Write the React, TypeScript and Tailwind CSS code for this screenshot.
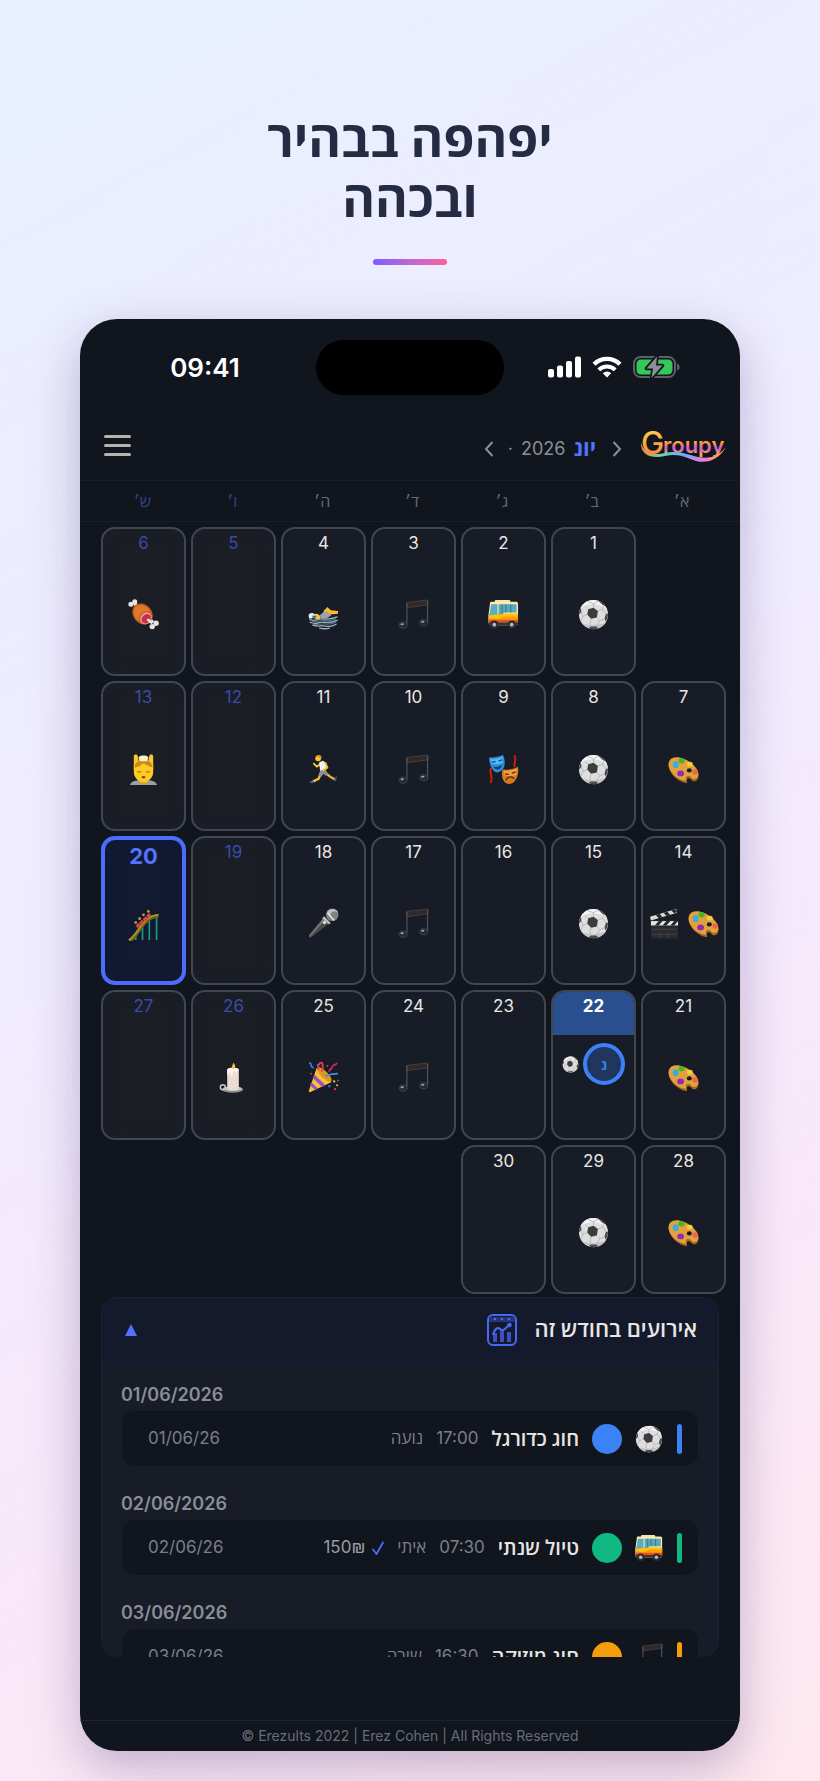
import React from "react";

type EmojiName =
  | "meat" | "swim" | "music" | "bus" | "ball" | "massage" | "run" | "masks"
  | "palette" | "coaster" | "mic" | "clapper" | "candle" | "party";

const drawings: Record<EmojiName, React.ReactNode> = {
  meat: (
    <>
      <g fill="#e9e4df">
        <circle cx="3" cy="5.5" r="2.6" /><circle cx="7" cy="2.8" r="2.6" />
        <path d="M5 5l3-2.500 4 6-3 2z" />
        <path d="M19 20l3-2 5 5-2.500 3z" />
        <circle cx="29" cy="25" r="2.800" /><circle cx="25" cy="28.500" r="2.800" />
      </g>
      <path d="M4.500 12C5 6 11 3.500 16 5c5 1.500 10 7 9.500 13-.5 6-6 9.500-11 8C8 24 4 18 4.500 12z" fill="#c2571a" />
      <path d="M6 11c1.500-5 7-5.500 10-4.500 3 1 6 4 7 7-4-2-9 0-11 4-1 2-1 4-.5 5.500C7 20 5 15 6 11z" fill="#e0782a" />
      <ellipse cx="18.500" cy="20" rx="6.500" ry="5.500" transform="rotate(-45 18.500 20)" fill="#f4a49a" />
      <ellipse cx="18.800" cy="20.300" rx="5.400" ry="4.400" transform="rotate(-45 18.800 20.300)" fill="#c5314b" />
      <path d="M19 21.500l2-1.500 4 3-2 2.500z" fill="#e9e4df" />
    </>
  ),
  swim: (
    <>
      <path d="M12 17l7-6.500 5 6.500-5 3-5 .5z" fill="#9fa0a8" />
      <path d="M16 12.500l4-4.300 3.500 3.300 7.500 1v2.600l-8 .9-4-3.500-2 1.500z" fill="#fbb92d" />
      <path d="M5 16.500c3-2.500 7-1 8 2.500l-1 2-5-.5z" fill="#fcc23a" />
      <path d="M.5 17.500c0-3.500 5-3.800 6-1.500l-1 3.500-4 1z" fill="#e7eef2" />
      <path d="M4.500 17l4 .5-.5 2.200-3.500-.7z" fill="#2e6f9b" />
      <path d="M2 21c5 3 8-1 13-.5 5 .5 9 .5 15-2M2 24c6 3 9-.5 14 0 5 .5 9 .5 14-2M5 27c5 2 9 0 13 1 4 .5 8 0 11-2M12 30c4 1 7 1 10 0" fill="none" stroke="#9bb2be" strokeWidth="1.300" strokeLinecap="round" />
      <path d="M3 22.500c5 2.500 8-.5 13-.3 5 .5 8 .5 13-1.700M4 25.500c5 2.500 9-.2 13 .2 4 .5 7 .3 12-1.700" fill="none" stroke="#4f6b7c" strokeWidth="1.200" />
    </>
  ),
  music: (
    <>
      <path d="M9 3.500l22-2.500v5L9 9z" fill="#332828" stroke="#4b4447" strokeWidth=".8" />
      <path d="M9.200 4v22M30.500 2v22" stroke="#4c525d" strokeWidth="1.300" />
      <ellipse cx="5.300" cy="27" rx="4.200" ry="3.200" fill="#252a31" stroke="#444b55" strokeWidth=".8" />
      <ellipse cx="26.500" cy="24.500" rx="4.200" ry="3.200" fill="#252a31" stroke="#444b55" strokeWidth=".8" />
      <ellipse cx="4.300" cy="26" rx="1.800" ry="1" fill="#98a1a5" />
      <ellipse cx="25.500" cy="23.500" rx="1.800" ry="1" fill="#98a1a5" />
    </>
  ),
  bus: (
    <>
      <rect x="7" y="1" width="16" height="3" rx="1" fill="#f3e3b2" />
      <path d="M3 2.800h26c1.300 0 2 1 2 2V25c0 1-.8 2-2 2H3c-1.300 0-2.500-1-2.500-2.500v-8L2 5c0-1.200.3-2.200 1-2.200z" fill="#fbe9b4" />
      <path d="M.8 15h30.200v6H.8z" fill="#ffc20e" />
      <path d="M.5 19.500l10 .8L16 18h15v5H.5z" fill="#ff9d0a" />
      <path d="M.5 21.500H31v2.500H.5z" fill="#e8501d" />
      <path d="M.5 24H31v1.500c0 1-1 1.500-2 1.500H3C1.500 27 .5 26 .5 25z" fill="#3a3535" />
      <path d="M3.300 5.500h6.500v10.200L1.500 17z" fill="#5badc0" />
      <path d="M11 5.500h18.500V14H17l-2.500 2H11z" fill="#57a9bd" />
      <path d="M14.500 5.500v9M18.500 5.500V14M23.500 5.500V14" stroke="#356d7c" strokeWidth=".9" />
      <circle cx="6.500" cy="26.500" r="4.200" fill="#2d2d30" /><circle cx="6.500" cy="26.500" r="2" fill="#b7b7ba" />
      <circle cx="24.500" cy="26.500" r="4.200" fill="#2d2d30" /><circle cx="24.500" cy="26.500" r="2" fill="#b7b7ba" />
    </>
  ),
  ball: (
    <>
      <circle cx="16" cy="16" r="15" fill="#dedede" />
      <path d="M16 1a15 15 0 0 1 14 9.500c-7-6-21-7-27.500-1A15 15 0 0 1 16 1z" fill="#f4f4f4" />
      <path d="M4 25a15 15 0 0 0 25-1c-6 3-18 4-25 1z" fill="#c4c4c4" />
      <path d="M10.500 10.500L16 9l4.500 3.500-1 6.500-6 1.500-4-4.500z" fill="#3c3c3e" />
      <path d="M20.500 1.800c3.500.9 6.500 3 8.300 6l-3.300-1.500zM31 15c0 3-1 6-2.500 8.300L27.300 20l1.500-4.500zM11 30.200l2-1.700h6l2 1.700a15 15 0 0 1-10 0zM1 16c0-3 .8-5 2-7l.6 4.500z" fill="#4a4a4c" />
      <path d="M16 9V5l5-3M16 5l-6-2.500M20.500 12.500l5-2 1-4M25.500 10.500l3.300 5M19.500 19l3 3.500 5-2M13.500 20.500l-1 4 .5 4M22.500 22.500L19 28M9.500 16L5 18l-2 5M3.600 13.500L5 18M10.500 10.500L7.500 8" fill="none" stroke="#b0b0b2" strokeWidth=".8" />
    </>
  ),
  massage: (
    <>
      <path d="M2 32c1-4 6-5 10-5h8c4 0 9 1 10 5z" fill="#9d9fa6" />
      <path d="M11 24h10v5c-3 2.500-7 2.500-10 0z" fill="#e5a81d" />
      <path d="M6 16V2.500C6 0 9.500 0 10 2l1 5h10l1-5c.5-2 4-2 4 .5V16z" fill="#fdc72c" />
      <path d="M6 11h20v7c0 7-5 11-10 11S6 25 6 18z" fill="#fecb22" />
      <path d="M6.500 14c1-6 5-8 9.500-8s8.500 2 9.500 8c-4-1-8-4-10-4.500C13 12 10 13.500 6.500 14z" fill="#c98a1c" />
      <path d="M11 3.500c1-2.500 9-2.500 10 0l-1 4h-8z" fill="#fff0c0" />
      <path d="M9.500 18c1 1 3 1 4 0M18.500 18c1 1 3 1 4 0" fill="none" stroke="#7c4c11" strokeWidth="1" />
      <ellipse cx="16" cy="24" rx="2" ry="1.200" fill="#8b3b1d" />
    </>
  ),
  run: (
    <>
      <path d="M12.500 10.500l-3.500 2.500-3-3" fill="none" stroke="#fbc02a" strokeWidth="2" strokeLinecap="round" strokeLinejoin="round" />
      <path d="M18.500 20l4.500 3.500 4.500 2.500" fill="none" stroke="#f3b023" strokeWidth="2.400" strokeLinecap="round" />
      <path d="M13 20.500l-2 5-6 3" fill="none" stroke="#fbc02a" strokeWidth="2.400" strokeLinecap="round" strokeLinejoin="round" />
      <path d="M11.500 8.500l4-1.500 3.500 2.500-.8 7.500-5.700.5z" fill="#eef0f4" />
      <path d="M12.500 17l5.700-.6 2.800 4.600-2.800 1.500-2-2-2.500 3-3-1z" fill="#8c9098" />
      <path d="M18 9.500l2 4.500-4 2.500" fill="none" stroke="#fbc02a" strokeWidth="2" strokeLinecap="round" strokeLinejoin="round" />
      <circle cx="10.500" cy="4.500" r="3" fill="#fcc62f" />
      <path d="M8 3c1-2.500 5-2.800 6 0l-.5 2.500-2-2z" fill="#e0981c" />
      <path d="M2 27.500l3.500 0 1 1.800-4.500 1zM27 26l2.300-3 .7.800-1.500 4.700z" fill="#454fa3" />
    </>
  ),
  masks: (
    <>
      <path d="M27.500 2c2 4-1 7 0 11M3 15c-1.500 5 2 8 0 14" fill="none" stroke="#c0200c" strokeWidth="2.200" strokeLinecap="round" />
      <path d="M1 3.500C6 4 11 3 15.500.800c2 5 2.500 10 .5 14C14 18 10 20 7.500 18.500 3.500 16 1 9 1 3.500z" fill="#2b8fe0" />
      <path d="M2.500 5c4 .5 8-.5 12-2 .5 2 .8 4 .7 6-4 2-8 2-11.500 1z" fill="#5cb8f5" />
      <path d="M4 8.500l4-.5M11 7l3.500-1" fill="none" stroke="#0e3f66" strokeWidth="1.300" />
      <path d="M5.500 13c3 1 7 0 9-2.500-.5 3-2 5-4 5.500s-4-1-5-3z" fill="#0e3f66" />
      <path d="M15 16c5 .5 11 0 16-2.800 1 6-.5 12-4 15.500-3 3-8 3-10.500-.7C14 24.500 14 20 15 16z" fill="#d87921" />
      <path d="M16.500 17.500c5 0 9-.8 13-2.500.2 3 0 5-.7 7-5 1-9 1-12.500 0z" fill="#f0a03e" />
      <path d="M17.500 20.500l4 .5M24.500 20l4-1.500M18.500 27c1.500-4 6-4.500 8.500-1.500" fill="none" stroke="#5e290b" strokeWidth="1.400" />
    </>
  ),
  palette: (
    <>
      <path d="M4 5.500c5-3 14 0 20 5 6 4.500 8.500 10 7 14.500-1.500 4-5 4-7 1.500-1.500-1.800-4-2-4.500 0-.4 1.500 1 3.500-.5 3.500C11 29 3.500 22 1.300 15.500-.2 11 .8 7.500 4 5.500z" fill="#a8691f" />
      <path d="M4 4.500c5-3 14 0 20 5 6 4.500 8.500 10 7 13.500-1.500 3.500-5 3.500-7 1.200-1.500-1.800-4.500-2.200-5.500 0-.4 1.500 1 3.700-.5 3.500C11 27 3.500 21 1.300 14.500-.2 10 .8 6.500 4 4.500z" fill="#e2a13c" />
      <ellipse cx="22" cy="17" rx="2.600" ry="2.200" fill="#171c26" />
      <ellipse cx="8" cy="11" rx="3" ry="3.500" fill="#37aedc" />
      <ellipse cx="14" cy="7" rx="3.200" ry="2.800" fill="#48b426" />
      <ellipse cx="22.500" cy="10.500" rx="3" ry="2.500" fill="#f5cf3a" />
      <ellipse cx="28" cy="18.500" rx="2.800" ry="2.800" fill="#ee6353" />
      <ellipse cx="13" cy="20" rx="3.500" ry="3" fill="#8e2bb5" />
    </>
  ),
  coaster: (
    <>
      <path d="M8 24v7M15 18v13M22 10v21M29.500 7v24" stroke="#1d9a80" strokeWidth="1.700" />
      <path d="M1 32C11 27 14 7 31.500 6" fill="none" stroke="#736319" strokeWidth="4" />
      <path d="M1 31C11 26 14 6 31.500 5" fill="none" stroke="#b79a2a" strokeWidth="1.500" />
      <path d="M9 17.500l14-13" fill="none" stroke="#cf4b35" strokeWidth="3.500" strokeDasharray="4.500 .5" />
      <g fill="#d39a3c"><circle cx="8" cy="13" r="1.400" /><circle cx="12" cy="9" r="1.400" /><circle cx="16" cy="5" r="1.400" /><circle cx="21" cy="1.500" r="1.400" /></g>
    </>
  ),
  mic: (
    <>
      <path d="M1 28.500L17 9l6 6L3 30.500c-1.500 1-2.800-.5-2-2z" fill="#4a4a4b" />
      <path d="M1 28.500L17 9l2 2L2 29.800z" fill="#747475" />
      <path d="M16.500 8.500l7 7-2 1.500-7-6.500z" fill="#b8b8b9" />
      <circle cx="25" cy="7" r="6.500" fill="#828284" />
      <path d="M20 4c3-5 10-3 11 1-2-2-5-2-7 0l-2 4z" fill="#bebec0" />
      <path d="M20 5l7 8" stroke="#e5e5e5" strokeWidth="1.600" />
      <circle cx="17" cy="15" r="1.800" fill="#d9d9da" />
    </>
  ),
  clapper: (
    <>
      <path d="M1 9L28 1l1 4L2 13z" fill="#d9d9d9" />
      <path d="M7 7.300l4-1.300 3 3.500-4 1.200zM15 5l4-1.200 3 3.300-4 1.200zM23 2.500l4-1.200L29 4l-3 1.500z" fill="#27272a" />
      <path d="M2 13h28v17c0 1-.5 1.500-1.500 1.500h-25C2.500 31.500 2 31 2 30z" fill="#2b2b2e" />
      <path d="M2 13.500h28V18H2z" fill="#e4e4e4" />
      <path d="M6 18l4-4.500h4L10 18zM14 18l4-4.500h4L18 18zM22 18l4-4.500h4L26 18z" fill="#27272a" />
      <path d="M3 22h26M3 27h26M11 27v4M20 27v4" stroke="#4a4a4d" strokeWidth=".8" />
    </>
  ),
  candle: (
    <>
      <ellipse cx="15" cy="28.500" rx="11" ry="3.300" fill="#8c8f92" />
      <ellipse cx="15" cy="27.500" rx="9.500" ry="2.500" fill="#c3c5c6" />
      <circle cx="5" cy="26" r="2.600" fill="none" stroke="#c4c7c9" strokeWidth="1.500" />
      <path d="M9.500 7.500c3-2 9-2 12 0V28c-3 1.800-9 1.800-12 0z" fill="#eadcd3" />
      <path d="M9.500 7.500c3-2 9-2 12 0-1 1.500-2 2-2.500 5-.5-3-2-3-3-3s-1 6-2 6-.5-5-1.500-5-1 4-3 3z" fill="#fff4ea" />
      <path d="M15.500 7c-2.500-2 0-4 .5-6.500C17.500 3 19 5 16.500 7z" fill="#fbbd3b" />
    </>
  ),
  party: (
    <>
      <path d="M9 6l15 15L2.500 31c-1 .5-2-.5-1.500-1.500z" fill="#f5c23b" />
      <ellipse cx="17" cy="13" rx="3.500" ry="10" transform="rotate(-45 17 13)" fill="#d99a1e" />
      <path d="M6.500 13L18 24l-3.500 1.800L5 16.500zM3.500 21l7 6.500-3 1.300L2 24z" fill="#9b4fc0" />
      <path d="M11 8c-2-6 3-9 4-6 0 3 1 6-1 8" fill="none" stroke="#e9335f" strokeWidth="2" />
      <path d="M18 15c4-3 8-2.500 13-3" fill="none" stroke="#4a90d9" strokeWidth="2" />
      <path d="M22 10c-1-3 3-2 3-5s4-1 5-4" fill="none" stroke="#d92f6a" strokeWidth="1.600" />
      <path d="M1 1c4 0 0 4 5 5" fill="none" stroke="#2f7bd8" strokeWidth="1.800" />
      <g fill="#f2c641"><circle cx="27" cy="20" r="1.200" /><circle cx="30" cy="24" r="1" /></g>
      <g fill="#2f7bd8"><circle cx="10" cy="3" r="1" /><circle cx="22" cy="25" r="1.200" /><circle cx="31" cy="19" r="1" /></g>
      <g fill="#e9335f"><circle cx="28" cy="28" r="1.200" /><circle cx="3" cy="12" r="1" /><circle cx="20" cy="4" r="1" /></g>
    </>
  ),
};

function Emoji({ name, className }: { name: EmojiName; className: string }) {
  return (
    <svg viewBox="0 0 32 32" aria-hidden="true" className={`shrink-0 ${className}`}>
      {drawings[name]}
    </svg>
  );
}

const monthDays: Record<number, EmojiName[]> = {
  1: ["ball"], 2: ["bus"], 3: ["music"], 4: ["swim"], 6: ["meat"],
  7: ["palette"], 8: ["ball"], 9: ["masks"], 10: ["music"], 11: ["run"], 13: ["massage"],
  14: ["palette", "clapper"], 15: ["ball"], 17: ["music"], 18: ["mic"], 20: ["coaster"],
  21: ["palette"], 22: ["ball"], 24: ["music"], 25: ["party"], 26: ["candle"],
  28: ["palette"], 29: ["ball"],
};

const weekdays = ["א׳", "ב׳", "ג׳", "ד׳", "ה׳", "ו׳", "ש׳"];

function DayCell({ day }: { day: number }) {
  const weekend = day % 7 === 5 || day % 7 === 6;
  const emojis = monthDays[day] ?? [];

  if (day === 20) {
    return (
      <button className="flex flex-col items-center rounded-[14px] border-4 border-[#4c6cfb] bg-[#121a31] pt-0.5 shadow-[inset_0_0_16px_#121738]">
        <span className="text-[22px] leading-7 font-bold text-[#5272fb]">20</span>
        <span className="flex flex-1 items-center">
          <Emoji name="coaster" className="size-[31px]" />
        </span>
      </button>
    );
  }
  if (day === 22) {
    return (
      <button className="flex flex-col items-center overflow-hidden rounded-[14px] border-2 border-[#42464f] bg-[#171c26]">
        <span className="h-[43px] w-full bg-[#294f8f] pt-0.5 text-[17px] leading-6 font-bold text-white">22</span>
        <span className="mt-2 flex items-center gap-1">
          <span className="flex size-[42px] items-center justify-center rounded-full border-4 border-[#3b82f6] bg-[#20365f] text-[14px] font-bold text-[#3b82f6]">נ</span>
          <Emoji name="ball" className="size-[17px]" />
        </span>
      </button>
    );
  }
  return (
    <button
      className={`flex flex-col items-center rounded-[14px] border-2 border-[#42464f] pt-0.5 ${
        weekend ? "bg-[#1b1e25] shadow-[inset_0_0_14px_#1a1f29]" : "bg-[#171c26]"
      }`}
    >
      <span className={`text-[17px] leading-6 ${weekend ? "text-[#3a4ba5]" : "text-[#e8e6e3]"}`}>{day}</span>
      <span className="flex flex-1 items-center gap-2">
        {emojis.map((name) => (
          <Emoji key={name} name={name} className="size-[31px]" />
        ))}
      </span>
    </button>
  );
}

interface EventItem {
  date: string;
  shortDate: string;
  title: string;
  time: string;
  who: string;
  price?: string;
  emoji: EmojiName;
  bar: string;
}

const events: EventItem[] = [
  { date: "01/06/2026", shortDate: "01/06/26", title: "חוג כדורגל", time: "17:00", who: "נועה", emoji: "ball", bar: "bg-[#3b82f6]" },
  { date: "02/06/2026", shortDate: "02/06/26", title: "טיול שנתי", time: "07:30", who: "איתי", price: "150₪", emoji: "bus", bar: "bg-[#10b981]" },
  { date: "03/06/2026", shortDate: "03/06/26", title: "חוג מוזיקה", time: "16:30", who: "שירה", emoji: "music", bar: "bg-[#f59e0b]" },
];

function EventGroup({ event }: { event: EventItem }) {
  return (
    <li className="mb-[21px]">
      <h3 className="text-left text-[18px] leading-[31px] font-semibold text-[#8a8d95]" dir="ltr">{event.date}</h3>
      <div className="flex h-[57px] items-center rounded-[14px] border border-[#191d26] bg-[#11151e] pr-4 pl-[26px]">
        <span className={`h-[30px] w-[5px] rounded-full ${event.bar}`} />
        <Emoji name={event.emoji} className="mr-[14px] size-7" />
        <span className={`mr-[13px] size-[30px] rounded-full ${event.bar}`} />
        <span className="mr-[13px] text-[20px] font-semibold text-[#e8e6e3]">{event.title}</span>
        <span className="mr-[13px] text-[17px] text-[#7b7f88]">{event.time}</span>
        <span className="mr-[13px] text-[17px] text-[#7b7f88]">{event.who}</span>
        {event.price && (
          <span className="mr-3 flex items-center gap-1.5 text-[17px] text-[#9a9ca1]">
            <svg viewBox="0 0 14 16" className="h-4 w-[14px]" fill="none" stroke="#4c6cfb" strokeWidth="1.800" strokeLinecap="round" strokeLinejoin="round" aria-hidden="true">
              <path d="M2 9.500l3.500 4.500L12 2.500" />
            </svg>
            <span dir="ltr">{event.price}</span>
          </span>
        )}
        <span className="mr-auto text-[17px] text-[#7b7f88]">{event.shortDate}</span>
      </div>
    </li>
  );
}

function StatusIcons() {
  return (
    <div className="flex items-center gap-[11px]" dir="ltr">
      <svg viewBox="0 0 33 22" className="h-[22px] w-[33px]" fill="#fff" aria-hidden="true">
        <rect x="0" y="13" width="6" height="8.500" rx="2" />
        <rect x="9" y="9.500" width="6" height="12" rx="2" />
        <rect x="18" y="5" width="6" height="16.500" rx="2" />
        <rect x="27" y="0.500" width="6" height="21" rx="2" />
      </svg>
      <svg viewBox="0 0 30 22" className="h-[22px] w-[30px]" fill="none" stroke="#fff" strokeWidth="4.400" aria-hidden="true">
        <path d="M2 8.200a18.500 18.500 0 0 1 26 0" />
        <path d="M6.800 13.900a11.500 11.500 0 0 1 16.400 0" strokeWidth="4" />
        <path d="M15 21.500l-4.200-4.300a6 6 0 0 1 8.400 0z" fill="#fff" stroke="none" />
      </svg>
      <svg viewBox="0 0 47 24" className="h-6 w-[47px]" aria-hidden="true">
        <rect x="1" y="2" width="41" height="20" rx="6.500" fill="none" stroke="#5c6068" strokeWidth="2" />
        <rect x="3.500" y="4.500" width="36" height="15" rx="4.500" fill="#34c759" />
        <path d="M44 8.500c3.500 1 3.500 6 0 7z" fill="#5c6068" />
        <path d="M24 1.500L13.500 13.500h6.500L18.500 23 29.500 10.500h-6.500z" fill="#8b8e93" stroke="#11151e" strokeWidth="3.500" paintOrder="stroke" strokeLinejoin="round" />
      </svg>
    </div>
  );
}

function Logo() {
  return (
    <svg viewBox="0 0 88 38" className="h-[38px] w-[88px] shrink-0" role="img" aria-label="Groupy" direction="ltr">
      <defs>
        <linearGradient id="word" x1="0" y1="0" x2="0" y2="1">
          <stop offset="0.25" stopColor="#ffd83f" />
          <stop offset="0.45" stopColor="#fb8a45" />
          <stop offset="0.62" stopColor="#c95af0" />
          <stop offset="0.85" stopColor="#f7a53c" />
        </linearGradient>
        <linearGradient id="initial" x1="0" y1="0" x2="0" y2="1">
          <stop offset="0" stopColor="#ffdf4a" />
          <stop offset="1" stopColor="#f97638" />
        </linearGradient>
        <linearGradient id="wave">
          <stop offset="0" stopColor="#f9873a" />
          <stop offset="0.25" stopColor="#63d6b4" />
          <stop offset="0.5" stopColor="#6fa8fb" />
          <stop offset="0.75" stopColor="#f17bd2" />
          <stop offset="1" stopColor="#ffb03b" />
        </linearGradient>
      </defs>
      <text x="1" y="26" fontFamily="Inter, sans-serif" fontSize="31" fontWeight="500" fill="url(#initial)">G</text>
      <text x="23" y="25" fontFamily="Inter, sans-serif" fontSize="22" fontWeight="600" fill="url(#word)">roupy</text>
      <path d="M1 14c-1 14 12 17 24 14 14-3 21 2 31 5 12 3 23-2 30-14-5 7-15 13-28 10-12-3-20-7-33-4-12 3-22 0-24-11z" fill="url(#wave)" />
    </svg>
  );
}

export default function App() {
  const days = Array.from({ length: 30 }, (_, i) => i + 1);
  return (
    <main
      dir="rtl"
      className="min-h-screen bg-[linear-gradient(152deg,#e7f1ff_0%,#ecedff_20%,#f0ecff_45%,#f8e8f8_72%,#ffe8ef_100%)] px-20 pt-[109px] pb-[30px] font-['Inter','Open_Sans','Noto_Sans',sans-serif]"
    >
      <h1 className="text-center text-[50px] leading-[60px] font-bold text-[#262b44]">
        יפהפה בבהיר
        <br />
        ובכהה
      </h1>
      <div className="mx-auto mt-[30px] h-1.5 w-[74px] rounded-full bg-linear-to-r from-[#7c5cff] to-[#ff5ca0]" />

      <section className="mt-[54px] flex flex-col overflow-hidden rounded-[37px] bg-[#11151e] shadow-[0_16px_48px_rgba(60,40,110,0.3)]">
        <div className="grid h-[98px] grid-cols-[1fr_188px_1fr] items-center" dir="ltr">
          <span className="pr-0.5 pb-0.5 pl-4 text-center text-[26px] font-semibold text-white">09:41</span>
          <span className="mt-[-2px] h-[55px] rounded-full bg-black" />
          <span className="flex justify-center pr-[17px] pb-0.5">
            <StatusIcons />
          </span>
        </div>

        <header className="flex h-[64px] items-center border-b border-[#191d27] pr-3 pl-6">
          <div className="pb-1">
            <Logo />
          </div>
          <div className="mr-[18px] flex items-center text-[18px] text-[#8c8e93]">
            <button aria-label="החודש הקודם">
              <svg viewBox="0 0 10 16" className="h-4 w-2.5" fill="none" stroke="currentColor" strokeWidth="2" aria-hidden="true">
                <path d="M1.500 1l6.500 7-6.500 7" />
              </svg>
            </button>
            <span className="mr-4 text-[22px] font-bold text-[#5272fb]">יונ</span>
            <span className="mr-2">2026</span>
            <span className="mr-2">·</span>
            <button aria-label="החודש הבא" className="mr-[14px]">
              <svg viewBox="0 0 10 16" className="h-4 w-2.5" fill="none" stroke="currentColor" strokeWidth="2" aria-hidden="true">
                <path d="M8.500 1L2 8l6.500 7" />
              </svg>
            </button>
          </div>
          <button aria-label="תפריט" className="mr-auto flex w-[27px] flex-col gap-1.5 pb-1.5">
            <span className="h-[3px] rounded-full bg-[#b4b3b0]" />
            <span className="h-[3px] rounded-full bg-[#b4b3b0]" />
            <span className="h-[3px] rounded-full bg-[#b4b3b0]" />
          </button>
        </header>

        <div className="grid h-[41px] grid-cols-7 items-center gap-[5px] border-b border-[#191d27] pr-4 pl-5 text-center text-base">
          {weekdays.map((label, i) => (
            <span key={label} className={i > 4 ? "text-[#35458f]" : "text-[#666a73]"}>{label}</span>
          ))}
        </div>

        <div className="mt-[5px] grid h-[767px] grid-cols-7 grid-rows-5 gap-[5px] pr-[14px] pl-[21px]">
          <span />
          {days.map((day) => (
            <DayCell key={day} day={day} />
          ))}
        </div>

        <section className="mx-[21px] mt-[3px] h-[360px] overflow-hidden rounded-[16px] border border-b-0 border-[#182040] bg-[#171c26]">
          <button aria-expanded="true" className="flex h-16 w-full items-center border-b border-[#182040] bg-[#14192b] pr-[21px] pl-[22px]">
            <span className="text-[22px] font-semibold text-[#e8e6e3]">אירועים בחודש זה</span>
            <svg viewBox="0 0 30 32" className="mr-[17px] h-8 w-[30px]" fill="none" stroke="#4a67f0" aria-hidden="true">
              <rect x="1" y="1" width="28" height="30" rx="5" strokeWidth="2" />
              <path d="M2 3h26v5H2z" fill="#25347c" stroke="none" />
              <g fill="#4a67f0" stroke="none"><circle cx="8" cy="5" r="1.300" /><circle cx="15" cy="5" r="1.300" /><circle cx="22" cy="5" r="1.300" /></g>
              <path d="M8 28v-9M15 28V17M22 28V18" strokeWidth="4" stroke="#3a51bf" />
              <path d="M6 21c2-7 5-8 7-6s4 1 6-1l3-3" strokeWidth="2.200" />
              <circle cx="22.500" cy="11" r="2.300" fill="#4a67f0" stroke="none" />
            </svg>
            <svg viewBox="0 0 14 14" className="mr-auto h-[14px] w-[14px]" aria-hidden="true">
              <path d="M7 1l6 12H1z" fill="#5272fb" />
            </svg>
          </button>
          <ul className="px-[19px] pt-[17px]">
            {events.map((event) => (
              <EventGroup key={event.date} event={event} />
            ))}
          </ul>
        </section>

        <footer className="mt-[63px] border-t border-[#1f232c] text-center text-[14px] leading-[30px] text-[#6a6d75]" dir="ltr">
          © Erezults 2022 | Erez Cohen | All Rights Reserved
        </footer>
      </section>
    </main>
  );
}
